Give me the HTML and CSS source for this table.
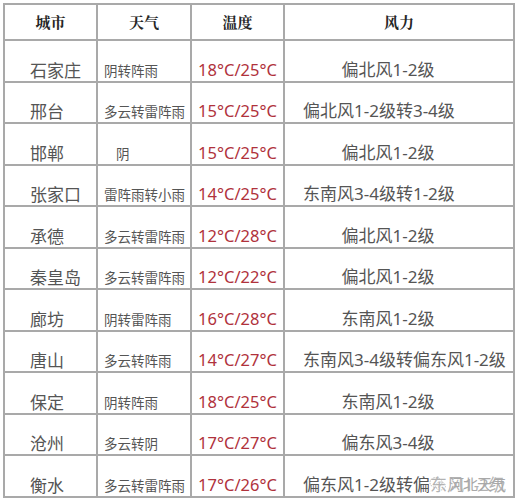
FILE: index.html
```html
<!DOCTYPE html>
<html lang="zh-CN">
<head>
<meta charset="utf-8">
<title>河北天气</title>
<link rel="stylesheet" href="styles.css">
</head>
<body>
<table class="weather">
  <colgroup>
    <col class="c-city">
    <col class="c-sky">
    <col class="c-temp">
    <col class="c-wind">
  </colgroup>
  <thead>
    <tr><th>城市</th><th>天气</th><th>温度</th><th>风力</th></tr>
  </thead>
  <tbody>
    <tr><td class="city">石家庄</td><td class="sky">阴转阵雨</td><td class="temp">18°C/25°C</td><td class="wind">偏北风1-2级</td></tr>
    <tr><td class="city">邢台</td><td class="sky">多云转雷阵雨</td><td class="temp">15°C/25°C</td><td class="wind long">偏北风1-2级转3-4级</td></tr>
    <tr><td class="city">邯郸</td><td class="sky indent">阴</td><td class="temp">15°C/25°C</td><td class="wind">偏北风1-2级</td></tr>
    <tr><td class="city">张家口</td><td class="sky">雷阵雨转小雨</td><td class="temp">14°C/25°C</td><td class="wind long">东南风3-4级转1-2级</td></tr>
    <tr><td class="city">承德</td><td class="sky">多云转雷阵雨</td><td class="temp">12°C/28°C</td><td class="wind">偏北风1-2级</td></tr>
    <tr><td class="city">秦皇岛</td><td class="sky">多云转雷阵雨</td><td class="temp">12°C/22°C</td><td class="wind">偏北风1-2级</td></tr>
    <tr><td class="city">廊坊</td><td class="sky">阴转雷阵雨</td><td class="temp">16°C/28°C</td><td class="wind">东南风1-2级</td></tr>
    <tr><td class="city">唐山</td><td class="sky">多云转阵雨</td><td class="temp">14°C/27°C</td><td class="wind long">东南风3-4级转偏东风1-2级</td></tr>
    <tr><td class="city">保定</td><td class="sky">阴转阵雨</td><td class="temp">18°C/25°C</td><td class="wind">东南风1-2级</td></tr>
    <tr><td class="city">沧州</td><td class="sky">多云转阴</td><td class="temp">17°C/27°C</td><td class="wind">偏东风3-4级</td></tr>
    <tr><td class="city">衡水</td><td class="sky">多云转雷阵雨</td><td class="temp">17°C/26°C</td><td class="wind long mark-cell">偏东风1-2级转偏东风1-2级<span class="mark"><svg class="mark-icon" viewBox="0 0 18 16" width="18" height="16"><ellipse cx="7" cy="6.5" rx="6" ry="5" fill="none" stroke="#b8b8b8" stroke-width="1" stroke-dasharray="1.5 1"/><ellipse cx="11.5" cy="10" rx="5" ry="4" fill="none" stroke="#c4c4c4" stroke-width="1" stroke-dasharray="1.5 1"/></svg><span class="mark-text">河北天气</span></span></td></tr>
  </tbody>
</table>
</body>
</html>
```

FILE: styles.css
```css
html, body {
  margin: 0;
  padding: 0;
  background: #ffffff;
}

.weather {
  border-collapse: collapse;
  table-layout: fixed;
  width: 510px;
  margin: 3px 0 0 3px;
  font-family: "Noto Sans", "Noto Sans CJK SC", sans-serif;
}

.c-city { width: 93px; }
.c-sky { width: 94px; }
.c-temp { width: 93px; }
.c-wind { width: 230px; }

.weather th,
.weather td {
  border: 2px solid #a9a9a9;
  padding: 0;
  white-space: nowrap;
  overflow: visible;
}

.weather th {
  font-family: "Noto Serif CJK SC", "Noto Sans CJK SC", serif;
  font-size: 15px;
  font-weight: 700;
  color: #262626;
  text-align: center;
  vertical-align: middle;
  line-height: 20px;
  height: 34px;
  box-sizing: border-box;
  padding: 7px 0;
}

.weather td {
  vertical-align: top;
  padding-top: 17.5px;
  line-height: 22px;
  color: #555555;
}

.city {
  font-family: "Noto Sans CJK SC", sans-serif;
  font-size: 17px;
  padding-left: 25px !important;
  color: #505050;
}

.sky {
  font-family: "Noto Sans CJK SC", sans-serif;
  font-size: 13.5px;
  padding-left: 6px !important;
  color: #5a5a5a;
}

.sky.indent { padding-left: 18px !important; }

.temp {
  font-family: "Noto Sans", sans-serif;
  font-size: 16.5px;
  color: #b0323c !important;
  text-align: center;
}

.wind {
  font-family: "Noto Sans", "Noto Sans CJK SC", sans-serif;
  font-size: 17px;
  text-align: center;
  padding-right: 22px !important;
  color: #555555;
}

.wind.long {
  text-align: left;
  padding-left: 18px !important;
  padding-right: 0 !important;
}

.mark-cell { position: relative; }

.mark {
  position: absolute;
  left: 144px;
  top: 16px;
  width: 80px;
  height: 24px;
  display: flex;
  align-items: center;
  gap: 2px;
  background: rgba(255, 255, 255, 0.55);
}

.mark-icon { flex: none; }

.mark-text {
  font-family: "Noto Sans CJK SC", sans-serif;
  font-size: 15px;
  color: #a8a8a8;
  letter-spacing: -1px;
}
```
